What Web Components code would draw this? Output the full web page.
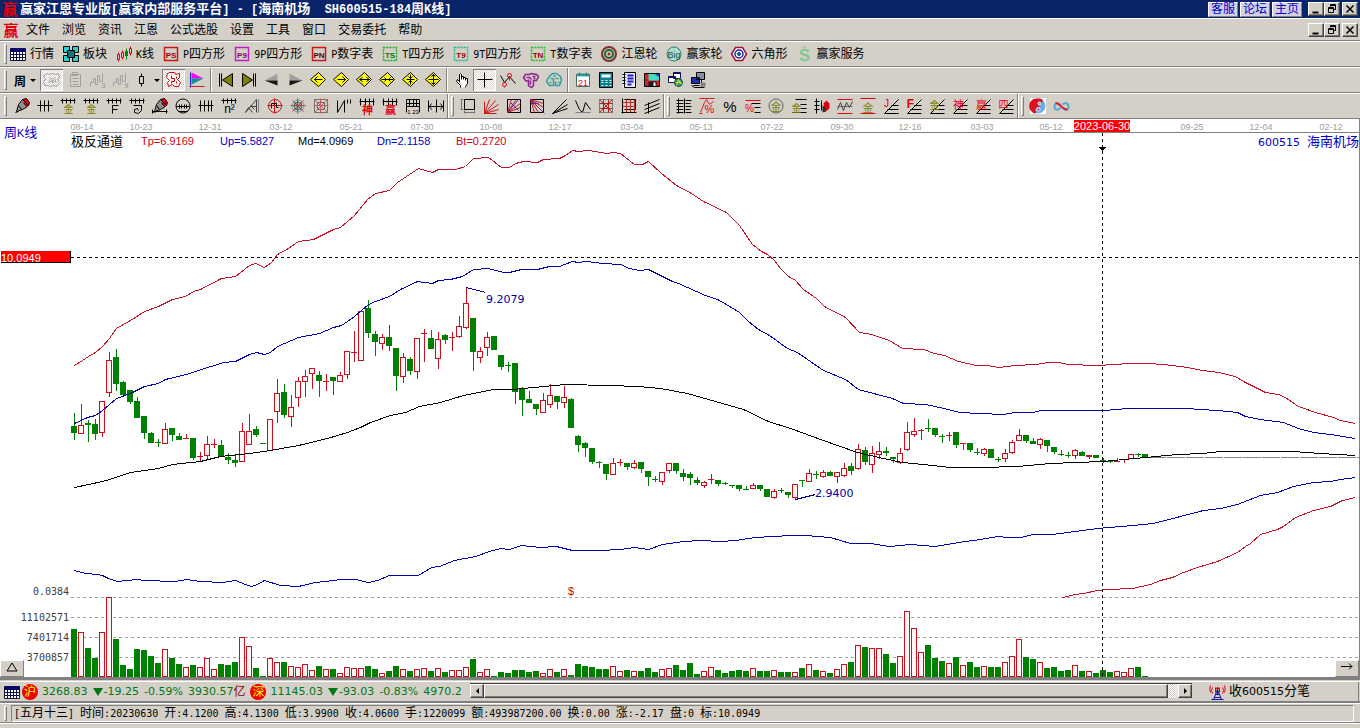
<!DOCTYPE html>
<html lang="zh-CN">
<head>
<meta charset="utf-8">
<title>赢家江恩专业版</title>
<style>
    body {
        margin: 0;
        background: #d4d0c8;
        font-family: "DejaVu Sans Mono", "Noto Sans CJK SC", monospace;
        font-size: 12px;
        overflow: hidden;
    }
</style>
</head>
<body>
<app-window></app-window>

<script>
// Latin runs use a half-width face so that they keep a 6px advance next to 12px hanzi
const mixed = (text) => text.replace(/[\x20-\x7e]+/g, (run) => `<span class="latin">${run}</span>`);

const define = (name, html, setup) => {
    const template = document.createElement("template");
    template.innerHTML = html;
    customElements.define(name, class extends HTMLElement {
        constructor() {
            super();
            this.attachShadow({ mode: "open" });
            this.shadowRoot.appendChild(template.content.cloneNode(true));
        }
        connectedCallback() {
            if (setup) setup(this, this.shadowRoot);
        }
    });
};

/* ---------- icons, drawn on a 16px grid ---------- */

const line = (d, c = "#000", w = 1) => `<path d="${d}" fill="none" stroke="${c}" stroke-width="${w}"/>`;
const fill = (d, c = "#000") => `<path d="${d}" fill="${c}"/>`;
const glyph = (t, x, y, size, c, extra = "") => `<text x="${x}" y="${y}" font-size="${size}" fill="${c}" text-anchor="middle" ${extra}>${t}</text>`;
const ring = (x, y, r, c, f = "none", w = 1) => `<circle cx="${x}" cy="${y}" r="${r}" fill="${f}" stroke="${c}" stroke-width="${w}"/>`;

const RED = "#e00010";
const OLIVE = "#808000";
const comb = line("M0 2H15M2 0V5M6 0V5M10 0V5M14 0V5");
const fan = line("M1 15H15M1 15L15 1M4 11H15M8 7H15");
const pen = fill("M8 1l4 -1 3 4 -1 3 -3 2z", RED) + fill("M8 1l4 7 -5 4 -4 0 1 -6z", "#909090") + line("M8 1l-4 5 -2 7 6 -2 5 -3M8 1l6 6M8 1l4 -1 3 4 -1 3M9 4l3 4") + line("M4 7l3 4M1 14l3 -1");
const boxed = (t, c, ink) => `<rect x="1" y="1" width="13" height="13" fill="none" stroke="${c}" stroke-width="1.5" ${t[0] === "T" ? 'stroke-dasharray="2 1"' : ""}/>` + glyph(t, 7.5, 11, 8, ink, 'font-weight="bold"');
const diamond = fill("M8 0L15 7L8 14L0 7z", "#ff0") + line("M8 0L15 7L8 14L0 7z");
const framed = (d) => line("M1 1H14V14H1z", "#808080") + line(d, "#b02020");

const ICONS = {
    logo: glyph("赢", 7.5, 13, 15, RED, 'font-weight="bold"'),
    table: fill("M0 2H15V14H0z", "#fff") + fill("M0 2H15V5H0z", "#000090") + line("M0 2H15V14H0zM0 5H15M0 8H15M0 11H15M3 5V14M6 5V14M9 5V14M12 5V14", "#101040"),
    blocks: fill("M0 0h6v6h-6zM9 0h6v6h-6zM0 9h6v6h-6zM9 9h6v6h-6z", "#2ad0d0") + line("M0 0h6v6h-6zM9 0h6v6h-6zM0 9h6v6h-6zM9 9h6v6h-6z") + fill("M4 4h7v7h-7z", "#107878") + line("M4 4h7v7h-7z"),
    kline: line("M2 6V8M2 13V15M1 8h2v5h-2z", RED) + line("M6 4V6M6 11V13M5 6h2v5h-2z", RED) + line("M10 2V13", "#080") + fill("M8.500 4.500h3v5h-3z", "#080") + line("M14 0V2M14 7V9M13 2h2v5h-2z", RED),
    ps: boxed("PS", "#c81818", "#900"), p9: boxed("P9", "#c020c0", "#806"), pn: boxed("PN", "#c81818", "#500"),
    ts: boxed("TS", "#20b020", "#070"), t9: boxed("T9", "#20b8a0", "#900"), tn: boxed("TN", "#20c020", "#900"),
    wheel: ring(7.5, 7.5, 7, "#803030", "#b8d0b8", 2) + ring(7.5, 7.5, 4, "#306030", "none", 2) + ring(7.5, 7.5, 1, "#a02020", "#a02020"),
    big: ring(7.5, 7.5, 7, "#208080", "#b0e0c8") + glyph("Big", 7.5, 11, 9, "#085050"),
    hex: fill("M4 1H11L15 7.5L11 14H4L0 7.5z", "#fff") + line("M4 1H11L15 7.5L11 14H4L0 7.5z", "#a01030", 1.5) + ring(7.5, 7.5, 4, "#2020d0", "#fff", 1.5) + ring(7.5, 7.5, 1.5, "#2020d0", "#0a0"),
    dollar: glyph("S", 8, 14, 17, "#80c890", 'font-weight="bold"') + line("M8 0V2M8 14V15", "#80c890", 2),

    flower: line("M3 1l2 1 3 -1 3 1 3 -1 1 4 -2 2 2 3 -3 4 -3 -1 -3 1 -3 -1 -3 0 -1 -4 2 -2 -2 -4zM5 5l3 2 3 -2M4 10l4 -2 4 2M8 7v4M5 7v2M11 7v2", "#a0a0a0"),
    clip: line("M3 2H13V14H3zM5 0H10V3H5zM5 6H11M5 9H11M5 12H11", "#a0a0a0"),
    wave3: line("M0 14V10H3V6H5V12H7V3H9V9H12V1", "#a0a0a0") + glyph("3", 13, 15, 7, "#909090"),
    wave9: line("M0 14V10H3V6H5V12H7V3H9V9H12V1", "#a0a0a0") + glyph("9", 13, 15, 7, "#909090"),
    candle: line("M7 1V4M7 11V14M5 4H9V11H5z", "#000"),
    brain: fill("M1 2H13V13H1z", "#fff4f4") + line("M3 0H8L9 2L13 1V5L11 7L14 10L12 14H8L6 12L2 14L1 10L3 8L0 5L1 1zM5 3V6H8V9H5V11M10 4V6M10 9V11", "#c01018"),
    flag: fill("M2 0L14 6H2z", "#f0f") + fill("M2 6H14L2 12z", "#109090") + line("M1 0V15", "#2020c0") + line("M0 14H15", "#c02020"),
    first: line("M1 1V14M3 1V14") + fill("M14 1V14L4 7.5z", OLIVE) + line("M14 1V14L4 7.5z"),
    last: line("M14 1V14M12 1V14") + fill("M1 1V14L11 7.5z", OLIVE) + line("M1 1V14L11 7.5z"),
    prev: fill("M13 1V8H0z", "#a0a0a0") + fill("M0 8L13 13V8z", "#181818"),
    next: fill("M2 1V8H15z", "#a0a0a0") + fill("M15 8L2 13V8z", "#181818"),
    dLeft: diamond + line("M4 7H12M7 4L4 7L7 10"),
    dRight: diamond + line("M4 7H12M9 4L12 7L9 10"),
    dWide: diamond + line("M3 7H13M6 5L3 7L6 9M10 5L13 7L10 9"),
    dNarrow: diamond + line("M2 7H14M5 5L7 7L5 9M11 5L9 7L11 9"),
    dIn: diamond + line("M8 2V12M4 7H12M6 4L8 6L10 4M6 10L8 8L10 10"),
    dTall: diamond + line("M8 2V12M3 7H13M6 4L8 2L10 4M6 10L8 12L10 10"),
    hand: fill("M5 8V1H7V6H13V11L11 15H6L2 9z", "#fff") + line("M5 10V2L6 1L7 2V7M7 4H9V7M9 5H11V8M11 6H13V11L11 14V15M6 15V13L2 9L3 7L5 9"),
    cross: line("M7 0V15M0 7H15"),
    pins: line("M0 3L4 10L9 4L15 11") + ring(4, 12, 2, RED) + ring(9, 3, 2, RED) + line("M4 14V15M9 5V8", RED),
    cloudP: line("M2 2H6L8 1L13 2L15 4L13 8H10V13L8 15L5 13V9L2 8L0 5zM3 5H6L8 7M9 4H12M7 8V12M10 6L12 6M5 7V9", "#902090", 1.5),
    cloudT: line("M6 1H10L14 4L15 8L13 13H9V9M6 1L2 5L0 9L3 13H7V6M4 6H7M9 6H12M3 10H5M11 10H13M7 3L9 4", "#30a0a0", 1.5),
    calendar: fill("M1 2H14V14H1z", "#fff") + fill("M1 1H14V4H1z", "#20b0b0") + line("M1 2H14V14H1zM4 0V3M11 0V3", "#407070") + glyph("21", 7.5, 13, 9, "#e01010"),
    calc: fill("M1 0H14V15H1z", "#108090") + line("M1 0H14V15H1z") + fill("M3 2H12V5H3z", "#fff") + line("M3 8H5M7 8H9M11 8H13M3 10H5M7 10H9M11 10H13M3 13H5M7 13H9M11 13H13", "#e0ffff"),
    note: fill("M1 0H14V15H1z", "#e8e8ff") + line("M3 0H14V15H3z") + line("M1 2H4M1 5H4M1 8H4M1 11H4") + line("M6 3H12M6 6H12M6 9H12M6 12H10", "#2020c0", 2),
    save: fill("M0 1H15V14H0z", "#d02020") + fill("M4 1H15V8H4z", "#40e0c0") + fill("M9 1H15V5z", "#2050d0") + fill("M4 9H12V14H4z", "#181830") + fill("M9 10H11V14H9z", "#fff") + line("M0 1H15V14H0z"),
    globe: fill("M1 4H8V10H1zM6 0H13V6H6z", "#fff") + line("M1 4H8V10H1zM6 0H13V6H6zM1 5H8M6 1H13", "#101060") + ring(11, 10, 4, "#104040", "#30a070") + line("M8 10H14M11 7L9 13M11 7L14 12", "#e0e020"),
    pcs: fill("M6 0H14V7H6z", "#8890a0") + fill("M1 5H9V11H1z", "#2030b0") + line("M6 0H14V7H6zM1 5H9V11H1zM3 13H9M11 7V14") + fill("M10 10H15V14H10z", "#808080") + line("M1 13L4 15H14"),

    pen,
    ticks: line("M0 7H15M3 2V13M7 2V13M11 2V13"),
    combJin1: comb + glyph("金", 8, 14, 10, OLIVE),
    combJin2: comb + glyph("金", 8, 14, 10, OLIVE),
    combF: comb + line("M6 15V7H12M6 11H11", "#000", 1),
    combSpiral: comb + line("M4 7H12V12L9 15L5 14V11L8 10L9 12"),
    penTicks: pen + line("M0 13H15M0 11V15M14 11V15"),
    circleTicks: ring(7.5, 7.5, 7, "#000") + line("M1 8H14M4 6V10M6 6V10M9 6V10M11 6V10M3 13H12"),
    ticks4: line("M0 7H15M2 2V13M6 2V13M10 2V13M13 2V13"),
    nSquare: comb + glyph("n²", 8, 14, 12, "#000"),
    triRuler: line("M1 14L12 1V14M1 14L4 9L8 14M12 8H6M10 11L6 7", "#404040") + line("M14 1V14", "#808080"),
    target: ring(7.5, 7.5, 6.5, "#a02020") + line("M7 0V15M0 7H15", RED) + line("M4 10V5H9V9H11M6 7L9 4"),
    star: ring(7.5, 7.5, 4, "#208080", "#a8a8a0") + line("M7 0V15M0 7H15M2 2L13 13M13 2L2 13", "#b04040") + ring(7.5, 7.5, 6, "#909090"),
    web: ring(7.5, 7.5, 4, "#409040") + line("M1 1H14V14H1zM4 4H11V11H4z", "#707070") + line("M7 0V15M0 7H15M1 1L14 14M14 1L1 14", "#c06060"),
    nQuote: line("M1 2V14M1 14L8 2V14") + line("M11 1V5M14 1V5"),
    shen: line("M0 3H15M1 0V7M6 0V7M10 0V7M14 0V7") + glyph("神", 8, 15, 11, RED, 'font-weight="bold"'),
    ying: line("M0 3H15M1 0V7M6 0V7M10 0V7M14 0V7") + glyph("赢", 8, 15, 11, RED, 'font-weight="bold"'),
    ruler123: line("M1 1H14V14M1 1V14M1 5H14M4 1V8M8 1V8M11 1V8M1 8H14") + glyph("1 23", 7.5, 15, 6, "#000"),
    widthArrow: line("M0 2V13M15 2V13M8 1V14M0 8H15M3 5L1 8L3 11M12 5L14 8L12 11"),

    square: line("M4 1H14V11H4z") + line("M0 1H3M0 11H3M1 1V11M4 14H14M4 12V15M14 12V15", "#707070"),
    fanRed: line("M1 15L1 3M1 15L6 1M1 15L12 2M1 15L15 6M1 15L15 11M1 15H13", "#c81818"),
    fanBox: line("M1 1H14V14H1z") + line("M1 14L5 1M1 14L9 2M1 14L14 5M1 14L14 9", "#c02020") + line("M1 14L12 1M4 4L12 12", "#6020a0"),
    fanBoxDown: line("M1 1H14V14H1z") + line("M1 1L14 5M1 1L14 9M1 1L9 14M1 1L5 14", "#c02020") + line("M1 1L15 15M1 5H9", "#6020a0"),
    fanThin: line("M0 15L14 1M0 15L15 6M0 15L15 10"),
    zigzag: line("M0 2L4 11L7 14L10 4L15 11") + line("M0 14H15", "#808080") ,
    gridRed: framed("M1 5H14M1 10H14M5 1V14M10 1V14M1 1L14 14M14 1L1 14"),
    gridDark: line("M1 0V15M0 14H15M3 11H14V1H3") + line("M1 4H14M1 8H14M5 1V14M9 1V14M13 1V14", "#b03030"),
    lines4: line("M0 7L15 1M0 11L15 5M0 15L15 9M4 4V15"),
    ladder: line("M2 0V15M8 0V15M0 2H7M0 5H7M0 8H7M0 11H7M0 14H7M9 2H15M9 5H14M9 8H15M9 11H14M9 14H15"),
    wavePct: line("M0 0H15M0 15H3M1 14L5 4L7 1L10 6L14 3", "#c82020") + glyph("%", 10, 14, 11, RED),
    pct: glyph("%", 7.5, 13, 15, "#000"),
    pctLines: glyph("%", 4, 13, 10, RED) + line("M0 2H15", RED) + line("M6 5H15M9 9H15M9 14H15"),
    jinRing: ring(7.5, 7.5, 7, "#606060") + glyph("金", 7.5, 12, 11, OLIVE),
    jinLines: line("M4 1H15M9 6H15M9 10H15M1 14H15") + glyph("金", 5, 13, 10, OLIVE),
    penRuler: line("M2 0V15M0 3H5M0 7H5M0 11H5M7 2V12") + fill("M9 5l3 -3 3 3v5l-5 4z", RED) + fill("M8 7l3 2v4l-3 1z", "#303030"),
    waveRed: line("M0 1H15M0 15H15", RED) + line("M0 8H15", "#707070") + line("M0 11L3 4L6 12L9 4L12 9L15 3", "#404040"),
    jinRed: line("M0 0H15M0 15H15", RED) + glyph("金", 7.5, 13, 11, OLIVE),
    fanJ: fan + glyph("J", 3, 8, 10, RED), fanF: fan + glyph("F", 4, 9, 12, RED, 'font-weight="bold"'),
    fanJin: fan + glyph("金", 5, 10, 10, OLIVE), fanShen: fan + glyph("神", 6, 10, 11, RED),
    fanYing: fan + glyph("赢", 6, 10, 11, RED), fanSi: fan + glyph("四", 5, 9, 10, RED),
    yinyang: fill("M-.5 -.5H15.5V15.500H-.5z", "#fff") + ring(7.5, 7.5, 7, "#60b0f0", "#60b0f0") + fill("M7.5 0A7.5 7.5 0 0 0 5 15C7 14 3 12 6 9C9 8 12 7 12 1C11 0 9 0 7.5 0z", "#e01020") + ring(9, 5, 1.5, "#fff", "#60b0f0") + ring(8, 11, 1.5, "#fff", "#e01020"),
    infinity: line("M7 7C5 4 1 4 1 8C1 12 5 12 7 9", "#58a8d0", 2) + line("M9 6C11 4 15 4 15 8C15 12 11 12 9 9", "#58a8d0", 2) + line("M2 5C6 3 9 12 14 11", "#d02030", 2),
    tower: line("M2 3A5 5 0 0 0 2 9M0 1A9 9 0 0 0 0 8M12 3A5 5 0 0 1 12 9M14 1A9 9 0 0 1 14 8M5 3V8M9 3V8", RED) + line("M7 5L3 15M7 5L11 15M5 10H9M4 13H10M1 15H13M7 4V10", "#101090") + ring(7, 4, 1, RED, RED),
    min: fill("M4 10H10V12H4z"),
    restore: line("M6 3H11V8H9M6 3V5M6 4H11M4 6H9V11H4zM4 7H9"),
    close: line("M4 4L11 11M11 4L4 11", "#000", 1.5),
};

define("tool-icon", `
    <style>
        :host { display: block; flex: none; width: 16px; height: 16px; }
        svg { display: block; width: 16px; height: 16px; overflow: visible; }
        text { font-family: "Liberation Sans", "Noto Sans CJK SC", sans-serif; }
    </style>
    <svg viewBox="-0.5 -0.5 16 16" aria-hidden="true"></svg>
`, (el, root) => {
    root.querySelector("svg").innerHTML = ICONS[el.getAttribute("name")] || "";
});

/* ---------- toolbars ---------- */

define("tool-bar", `
    <style>
        :host {
            display: flex;
            align-items: center;
            height: 24px;
            padding-left: 4px;
            border-top: 1px solid #fff;
            border-bottom: 1px solid #808080;
            background: #d4d0c8;
        }
        .grip { width: 1px; height: 18px; margin-right: 3px; border: 1px solid; border-color: #fff #808080 #808080 #fff; }
        ::slotted(tool-sep) { align-self: stretch; }
    </style>
    <div class="grip"></div>
    <slot></slot>
`);

// One thin divider inside a bar; "grip" starts a new docked bar
define("tool-sep", `
    <style>
        :host { display: flex; align-items: center; width: 6px; }
        :host::before { content: ""; align-self: stretch; width: 1px; margin-left: 2px; background: #808080; border-right: 1px solid #fff; }
        :host([grip]) { width: 9px; }
        :host([grip])::before { margin-left: 0; }
        :host([grip])::after { content: ""; width: 1px; height: 18px; margin-left: 2px; border: 1px solid; border-color: #fff #808080 #808080 #fff; }
    </style>
`);

define("tool-button", `
    <style>
        :host { display: block; }
        button {
            display: flex;
            align-items: center;
            justify-content: center;
            gap: 4px;
            width: 23px;
            height: 22px;
            padding: 0;
            border: 0;
            background: none;
            font: inherit;
            color: #000;
        }
        :host([pressed]) button {
            box-shadow: inset 1px 1px #808080, inset -1px -1px #fff;
            background: repeating-conic-gradient(#fff 0 25%, #dcd8d0 0 50%) 0 0 / 2px 2px;
        }
        :host([label]) button { width: auto; margin-right: 9px; line-height: 16px; white-space: nowrap; }
        :host([drop]) button { width: 30px; }
        :host([drop]) button::after { content: ""; border: 3px solid transparent; border-top-color: #000; border-bottom: 0; }
        .latin { font-size: 10px; }
        b:empty, .text:empty { display: none; }
    </style>
    <button type="button"><tool-icon></tool-icon><b></b><span class="text"></span></button>
`, (el, root) => {
    const icon = el.getAttribute("icon");
    if (icon) root.querySelector("tool-icon").replaceWith(Object.assign(document.createElement("template"), { innerHTML: `<tool-icon name="${icon}"></tool-icon>` }).content);
    else root.querySelector("tool-icon").remove();
    root.querySelector("b").textContent = el.getAttribute("period") || "";
    root.querySelector(".text").innerHTML = mixed(el.getAttribute("label") || "");
    if (icon && !el.hasAttribute("label")) root.querySelector("button").setAttribute("aria-label", icon);
});

define("window-controls", `
    <style>
        :host { display: flex; margin: 0 2px 0 6px; }
        button {
            display: grid;
            place-content: center;
            width: 16px;
            height: 14px;
            padding: 0;
            border: 1px solid;
            border-color: #fff #404040 #404040 #fff;
            background: #d4d0c8;
            box-shadow: inset -1px -1px #808080;
            overflow: hidden;
        }
        button:last-child { margin-left: 2px; }
    </style>
    <button type="button" aria-label="最小化"><tool-icon name="min"></tool-icon></button>
    <button type="button" aria-label="还原"><tool-icon name="restore"></tool-icon></button>
    <button type="button" aria-label="关闭"><tool-icon name="close"></tool-icon></button>
`);

define("title-bar", `
    <style>
        :host { display: flex; align-items: center; height: 18px; padding-left: 2px; background: #0a246a; color: #fff; }
        h1 { flex: 1; margin: 0 0 0 2px; font-size: 13px; line-height: 18px; font-weight: bold; white-space: pre; }
        .latin { font: bold 12px "Liberation Mono", monospace; }
        nav { display: flex; gap: 2px; }
        a {
            width: 28px;
            height: 13px;
            border: 1px solid;
            border-color: #fff #808080 #808080 #fff;
            background: #d4d0e0;
            color: #0000d0;
            line-height: 13px;
            text-align: center;
            text-decoration: none;
        }
    </style>
    <tool-icon name="logo"></tool-icon>
    <h1>${mixed("赢家江恩专业版[赢家内部服务平台] - [海南机场  SH600515-184周K线]")}</h1>
    <nav><a href="#service">客服</a><a href="#forum">论坛</a><a href="#home">主页</a></nav>
    <window-controls></window-controls>
`);

define("menu-bar", `
    <style>
        :host { display: flex; align-items: center; height: 20px; padding: 1px 0 0 3px; border-top: 1px solid #fff; border-bottom: 1px solid #808080; }
        nav { display: flex; flex: 1; gap: 12px; padding-left: 7px; }
        button { padding: 0; border: 0; background: none; color: #000; font: inherit; line-height: 18px; }
    </style>
    <tool-icon name="logo"></tool-icon>
    <nav></nav>
    <window-controls></window-controls>
`, (el, root) => {
    root.querySelector("nav").innerHTML = "文件 浏览 资讯 江恩 公式选股 设置 工具 窗口 交易委托 帮助"
        .split(" ").map((name) => `<button type="button">${name}</button>`).join("");
});

/* ---------- chart ---------- */

// side, high, body top, body bottom, low, volume top: one entry per week
const WEEKS = `
g 413 426 433 439 629|r 404 425 433 433 632|g 420 423 425 441 648|g 419 424 434 439 658|r 401 401 432 436 632
r 352 360 392 396 597|g 349 357 384 390 639|g 381 382 395 395 665|g 390 390 402 403 669|g 397 401 418 418 649
g 416 416 433 438 650|g 432 433 443 443 656|g 439 442 442 446 663|r 423 429 443 443 649|g 428 428 435 440 658
g 433 436 440 440 664|r 434 438 439 439 667|g 438 438 458 459 665|r 452 456 457 460 667|r 436 444 455 459 658
r 439 444 445 447 669|g 440 445 456 456 664|g 453 457 460 463 665|g 455 460 463 466 662|r 423 431 461 461 637
r 414 431 444 444 646|g 426 429 435 436 668|g 443 443 443 443 676|r 419 419 450 450 658|r 379 393 411 422 662
g 384 392 415 417 662|r 395 407 416 426 666|r 377 381 397 406 667|r 370 376 381 396 664|r 368 368 373 388 670
g 371 375 381 396 666|r 374 381 381 390 669|g 377 377 381 394 669|r 372 375 381 381 673|r 351 351 374 378 667
r 331 352 352 361 668|r 311 311 360 360 668|g 300 308 333 337 666|g 331 334 342 355 669|r 334 337 343 349 673
g 325 337 346 350 671|g 348 348 376 390 666|r 353 357 376 382 669|g 357 359 371 374 671|r 338 338 371 378 669
r 329 333 334 361 668|g 330 338 349 349 671|r 332 339 358 368 668|g 334 335 340 343 672|r 332 337 337 350 670
r 316 326 336 337 670|r 287 303 327 328 667|g 318 318 352 370 659|r 347 351 357 362 672|r 332 337 347 355 669
g 336 336 350 350 676|g 355 355 367 369 672|g 362 365 366 371 673|g 363 363 392 403 670|g 387 389 400 415 670
g 391 399 403 403 672|g 404 404 409 414 671|r 393 400 412 412 673|r 384 395 404 407 669|g 396 396 402 408 672
r 386 397 402 407 669|g 398 399 428 428 675|g 435 436 445 451 664|g 442 443 448 456 666|g 448 448 462 463 667
g 461 462 463 467 669|g 464 464 474 479 669|r 458 463 474 474 666|r 459 462 462 465 671|g 463 463 467 469 670
r 460 463 467 468 671|g 462 462 469 472 671|g 471 471 477 485 668|g 476 479 480 481 672|r 472 472 481 484 669
r 463 463 470 472 668|g 463 463 471 473 665|g 469 473 477 480 670|g 472 474 478 484 663|g 477 480 483 484 674
r 481 482 485 487 671|r 474 479 480 483 667|g 480 480 484 485 670|g 482 483 483 484 673|g 485 485 485 487 671
g 485 485 489 490 670|g 486 489 489 489 671|r 483 485 488 488 668|g 485 485 489 490 671|g 489 489 497 497 671
r 489 491 497 498 670|g 488 490 490 492 672|g 492 492 495 497 672|r 484 484 497 499 672|g 480 480 480 486 668
r 469 473 481 481 664|g 471 474 474 478 670|r 470 472 476 477 671|g 471 472 476 476 673|r 472 472 476 482 669
r 463 468 475 476 664|g 463 466 471 474 662|r 444 449 468 469 645|g 447 450 462 464 647|r 446 453 464 472 648
r 442 451 454 458 648|g 447 451 453 455 654|g 457 457 459 462 663|r 448 453 462 463 656|r 422 432 449 450 611
r 418 431 434 436 628|r 429 430 431 439 652|g 419 428 428 431 645|g 428 428 435 436 658|g 434 436 437 442 661
r 432 435 435 440 663|g 432 432 445 447 657|r 443 443 443 449 665|g 443 443 450 451 662|g 448 452 453 454 667
r 448 449 453 455 666|g 449 449 458 458 667|g 457 459 459 461 667|r 449 453 458 461 662|r 440 442 452 453 656
r 429 435 440 440 639|g 435 435 441 442 657|g 438 441 444 444 659|r 438 439 444 448 662|g 440 440 446 451 668
g 447 447 452 453 667|g 450 454 454 455 671|g 452 455 455 457 670|r 449 450 455 458 665|g 451 452 456 456 671
r 455 455 457 458 671|g 455 455 458 458 673|g 458 460 460 462 670|g 460 461 461 462 672|r 458 461 461 461 671
r 459 459 460 462 672|r 454 454 458 458 668|g 453 454 454 456 667|g 454 454 457 457 676
`.trim().split(/[|\n]/).map((row) => row.split(" "));

const CURVES = [
    ["#c01428", "74,365 82,360 88,356 95,352 102,346 109,338 116,328 130,320 144,311 158,306 172,299 185,296 193,291 200,289 221,278 235,276 249,265 255,263 264,267 271,262 277,254 288,248 298,241 313,239 333,229 340,227 354,215 367,199 375,193 389,190 397,182 418,168 432,172 438,169 455,169 465,166 473,158 488,157 501,167 509,167 515,163 523,161 537,162 543,159 559,158 565,155 572,150 578,151 588,150 607,153 613,152 620,153 634,164 642,164 648,161 661,173 676,185 691,193 703,201 726,212 739,225 752,244 761,251 767,254 774,260 780,268 788,276 795,280 803,289 816,298 824,306 845,317 859,332 871,334 889,340 902,348 923,349 934,353 944,355 958,361 976,365 987,365 998,367 1015,365 1035,364 1048,362 1058,362 1068,364 1097,365 1130,363 1147,363 1163,364 1187,367 1202,370 1218,372 1235,376 1243,381 1265,392 1278,394 1285,397 1298,406 1315,412 1333,417 1340,420 1355,423"],
    ["#0000a8", "74,423 87,417 95,415 102,410 116,398 130,393 144,386 158,383 165,379 186,374 207,367 214,365 223,362 235,361 249,354 256,352 264,354 270,352 277,346 284,343 298,337 319,333 333,327 341,325 347,321 354,316 361,310 368,304 375,301 389,296 400,289 417,281 432,283 438,280 450,279 462,276 473,269 488,268 503,272 509,272 521,269 537,269 549,266 559,266 572,261 578,262 586,261 603,263 620,264 629,268 639,270 648,269 672,281 678,283 705,295 717,299 726,304 739,312 748,321 758,329 769,335 787,348 797,352 823,370 845,379 858,389 892,398 903,403 925,404 944,408 959,412 980,413 1003,414 1015,412 1033,412 1040,410 1103,410 1128,408 1188,408 1198,409 1218,410 1237,412 1245,416 1260,419 1283,422 1298,428 1313,432 1330,434 1355,438"],
    ["#000", "74,487 102,481 109,479 130,472 158,468 172,464 200,461 220,456 249,453 270,450 298,445 327,438 347,432 360,427 370,422 390,415 405,412 419,406 440,402 463,395 493,389 513,389 533,387 565,384 608,385 638,386 660,388 687,393 743,409 768,421 793,429 820,439 857,452 883,458 902,462 932,465 950,467 980,467 1017,466 1050,463 1102,461 1145,457 1177,454 1202,453 1220,451 1292,451 1320,453 1355,455"],
    ["#0000a8", "74,570 85,573 97,574 102,575 108,578 117,581 137,579 143,580 175,581 186,579 200,581 222,582 235,580 245,584 251,586 257,584 264,580 280,585 298,586 315,582 333,580 340,579 355,579 368,582 377,580 389,575 418,575 431,567 439,566 454,560 475,556 489,551 500,548 509,549 521,545 540,547 556,546 572,550 600,550 620,549 634,547 648,549 662,544 683,541 700,540 720,541 735,540 755,537 790,535 805,535 830,537 850,543 870,543 889,546 910,544 935,546 958,542 980,539 997,536 1007,537 1020,537 1033,534 1052,534 1097,528 1133,525 1153,523 1180,516 1203,510 1220,508 1237,504 1260,495 1277,492 1293,486 1313,482 1330,481 1340,479 1355,477"],
    ["#c01428", "1062,597 1075,594 1083,593 1097,590 1108,589 1132,588 1150,584 1160,580 1172,577 1183,572 1197,567 1217,561 1237,552 1245,546 1250,543 1260,534 1277,529 1283,526 1295,517 1313,510 1330,506 1342,500 1355,497"],
];

const DATES = [[82, "08-14"], [141, "10-23"], [210, "12-31"], [281, "03-12"], [351, "05-21"], [422, "07-30"], [491, "10-08"], [560, "12-17"], [632, "03-04"], [701, "05-13"], [772, "07-22"], [842, "09-30"], [910, "12-16"], [982, "03-03"], [1051, "05-12"], [1192, "09-25"], [1261, "12-04"], [1331, "02-12"]];
const LEGEND = [[141, "Tp=6.9169", "#d00010"], [220, "Up=5.5827", "#0000c0"], [298, "Md=4.0969", "#000"], [377, "Dn=2.1158", "#0000c0"], [456, "Bt=0.2720", "#d00010"]];
const SCALE = [[595, "0.0384"], [621, "11102571"], [641, "7401714"], [661, "3700857"]];
const BASE = 677;
const STEP = 7;

const drawWeeks = () => WEEKS.map(([side, ...values], i) => {
    const [high, top, bottom, low, volume] = values.map(Number);
    const x = 71 + i * STEP;
    const height = bottom - top;
    const up = side === "r";
    const color = up ? "#c81020" : "#008000";
    const wick = (a, b) => b > a ? `<rect x="${x + 3}" y="${a}" width="1" height="${b - a + 1}" fill="${color}"/>` : "";
    const hollow = (y, h) => `<rect x="${x + .5}" y="${y + .5}" width="5" height="${h}" fill="#fff6f4" stroke="${color}"/>`;
    const solid = (y, h) => `<rect x="${x}" y="${y}" width="6" height="${h}" fill="${color}"/>`;
    const body = up && height > 2 ? hollow(top, height) : solid(top, Math.max(height, 1));
    const bar = up ? hollow(volume, BASE - volume - 1) : solid(volume, BASE - volume);
    return wick(high, top) + wick(bottom, low) + (height < 1 ? wick(high, low) : "") + body + bar;
}).join("");

define("kline-chart", `
    <style>
        :host { display: block; position: relative; background: #fff; border-right: 1px solid #808080; border-bottom: 3px solid #808080; }
        svg { display: block; width: 100%; height: 558px; }
        text { font: 11px "Liberation Sans", "Noto Sans CJK SC", sans-serif; }
        text.date { font-size: 9px; fill: #a0a0a0; text-anchor: middle; }
        text.han { font-size: 13px; }
        text.wide { font-family: "DejaVu Sans", sans-serif; }
        text.scale { font: 10px "DejaVu Sans Mono", monospace; fill: #404040; text-anchor: end; }
        .end { text-anchor: end; }
        button {
            position: absolute;
            bottom: 0;
            width: 24px;
            height: 17px;
            padding: 0;
            border: 1px solid;
            border-color: #fff #808080 #808080 #fff;
            background: #d4d0c8;
        }
        button svg { width: 22px; height: 15px; }
        .expand { left: 0; }
        .forward { right: 0; }
    </style>
    <svg class="plot" role="img" aria-label="周K线"></svg>
    <button class="expand" type="button" aria-label="展开"><svg viewBox="0 0 22 15"><path d="M11 2L16 10H6z" fill="none" stroke="#000"/></svg></button>
    <button class="forward" type="button" aria-label="前进"><svg viewBox="0 0 22 15"><path d="M5 5.5H16M13 2.500L16 5.500L13 8.500" fill="none" stroke="#000"/></svg></button>
`, (el, root) => {
    const rule = (y, x, color, dash) => `<line x1="${x}" x2="100%" y1="${y}.5" y2="${y}.5" stroke="${color}" stroke-dasharray="${dash}"/>`;
    root.querySelector(".plot").innerHTML = `
        <g transform="translate(0 -119)">
            <g shape-rendering="crispEdges">
                ${rule(132, 71, "#808080", "none")}
                ${[597, 617, 637, 657].map((y) => rule(y, 71, "#a0a0a0", "3 3")).join("")}
                ${rule(457, 1148, "#808080", "18 1")}
                ${drawWeeks()}
                ${CURVES.map(([color, points]) => `<polyline points="${points}" transform="translate(.5 .5)" fill="none" stroke="${color}"/>`).join("")}
                ${rule(257, 71, "#000", "3 3")}
                <line x1="1102.5" x2="1102.5" y1="133" y2="677" stroke="#000" stroke-dasharray="3 3"/>
                <path d="M1099 147H1106L1103 151H1102z"/>
                <path d="M466.5 287.5L485.5 292.5M795.5 499.5L815.5 494.5" stroke="#0000a8"/>
                <rect x="1" y="251" width="70" height="12" fill="#000"/>
                <rect x="1" y="251" width="69" height="11" fill="#f00"/>
                <rect x="1074" y="120" width="56" height="12" fill="#f00"/>
            </g>
            ${DATES.map(([x, date]) => `<text class="date" x="${x}" y="130">${date}</text>`).join("")}
            <text x="1102" y="130" fill="#fff" text-anchor="middle">2023-06-30</text>
            <text x="1" y="262" fill="#fff">10.0949</text>
            <text class="han" x="4" y="137" fill="#0000c0">周<tspan font-size="11">K</tspan>线</text>
            <text class="han" x="71" y="146">极反通道</text>
            ${LEGEND.map(([x, value, color]) => `<text x="${x}" y="145" fill="${color}">${value}</text>`).join("")}
            <text class="han end" x="100%" y="146" fill="#0000c0" xml:space="preserve"><tspan font-family="DejaVu Sans" font-size="11">600515  </tspan>海南机场</text>
            <text class="wide" x="486" y="303" fill="#0000a8">9.2079</text>
            <text class="wide" x="815" y="497" fill="#0000a8">2.9400</text>
            <text x="568" y="595" fill="#d00010">$</text>
            ${SCALE.map(([y, value]) => `<text class="scale" x="69" y="${y}">${value}</text>`).join("")}
        </g>
    `;
});

/* ---------- bottom bars ---------- */

define("market-quote", `
    <style>
        :host { display: flex; align-items: center; gap: 5px; margin-right: 3px; color: #007818; line-height: 16px; }
        i { width: 16px; height: 16px; margin-right: -1px; border-radius: 8px; background: #f00000; color: #ff0; font-size: 12px; font-style: normal; text-align: center; }
        .change { display: flex; align-items: center; gap: 1px; }
        .change::before { content: ""; border: 5px solid transparent; border-top: 8px solid #007818; border-bottom: 0; }
        .turnover { display: flex; align-items: center; }
        .unit { color: #800000; font-size: 12px; }
    </style>
    <i></i><span class="index"></span><span class="change"></span><span class="rate"></span><span class="turnover"></span>
`, (el, root) => {
    root.querySelector("i").textContent = el.getAttribute("market");
    for (const key of ["index", "change", "rate"]) root.querySelector(`.${key}`).textContent = el.getAttribute(key);
    root.querySelector(".turnover").innerHTML = el.getAttribute("turnover").replace("亿", '<span class="unit">亿</span>');
});

define("ticker-bar", `
    <style>
        :host { display: flex; height: 19px; border-top: 1px solid #fff; border-bottom: 2px solid #808080; font: 11px "DejaVu Sans", "Noto Sans CJK SC", sans-serif; white-space: nowrap; }
        .quotes { display: flex; align-items: center; flex: 0 0 466px; gap: 2px; padding-left: 4px; overflow: hidden; }
        .scroll { display: flex; flex: 1; height: 14px; margin: 1px 17px 0 0; border-top: 1px solid #404040; background: repeating-conic-gradient(#fff 0 25%, #d4d0c8 0 50%) 0 0 / 2px 2px; }
        .scroll > * { padding: 0; border: 1px solid; border-color: #fff #404040 #404040 #fff; background: #d4d0c8; box-shadow: inset -1px -1px #808080; }
        button { display: grid; place-items: center; width: 14px; }
        button::before { content: ""; border: 3px solid transparent; border-right: 3px solid #000; border-left: 0; }
        button:last-child::before { border-right: 0; border-left: 3px solid #000; }
        .thumb { flex: 1; margin-right: 10px; }
        .feed { display: flex; align-items: center; gap: 3px; flex: 0 0 148px; margin-right: 1px; border-right: 1px solid #808080; padding-left: 1px; line-height: 16px; }
        .feed span { font-size: 13px; }
        .feed .latin { font-size: 11px; }
    </style>
    <div class="quotes">
        <tool-icon name="table"></tool-icon>
        <market-quote market="沪" index="3268.83" change="-19.25" rate="-0.59%" turnover="3930.57亿"></market-quote>
        <market-quote market="深" index="11145.03" change="-93.03" rate="-0.83%" turnover="4970.2"></market-quote>
    </div>
    <div class="scroll">
        <button type="button" aria-label="向左"></button>
        <div class="thumb"></div>
        <button type="button" aria-label="向右"></button>
    </div>
    <div class="feed"><tool-icon name="tower"></tool-icon><span>${mixed("收600515分笔")}</span></div>
`);

define("status-bar", `
    <style>
        :host { display: flex; align-items: center; height: 18px; padding: 0 6px 0 4px; border-top: 1px solid #fff; border-bottom: 1px solid #808080; box-shadow: 0 1px #fff; }
        .grip { width: 1px; height: 13px; border: 1px solid; border-color: #fff #808080 #808080 #fff; }
        output { flex: 1; margin-left: 4px; padding-left: 2px; border: 1px solid; border-color: #808080 #fff #fff #808080; line-height: 15px; height: 15px; white-space: pre; }
        .latin { font-size: 10px; }
    </style>
    <div class="grip"></div>
    <output>${mixed("[五月十三] 时间:20230630 开:4.1200 高:4.1300 低:3.9900 收:4.0600 手:1220099 额:493987200.00 换:0.00 涨:-2.17 盘:0 标:10.0949")}</output>
`);

/* ---------- window ---------- */

const buttons = (names) => names.split(" ").map((name) => name === "|" ? "<tool-sep></tool-sep>" : name === "||" ? "<tool-sep grip></tool-sep>"
    : `<tool-button icon="${name.replace("*", "")}" ${name.endsWith("*") ? "pressed" : ""}></tool-button>`).join("");

const VIEWS = [["table", "行情"], ["blocks", "板块"], ["kline", "K线"], ["ps", "P四方形"], ["p9", "9P四方形"], ["pn", "P数字表"], ["ts", "T四方形"], ["t9", "9T四方形"], ["tn", "T数字表"], ["wheel", "江恩轮"], ["big", "赢家轮"], ["hex", "六角形"], ["dollar", "赢家服务"]];

define("app-window", `
    <style>
        :host { display: flex; flex-direction: column; min-height: 100vh; background: #d4d0c8; cursor: default; }
        ticker-bar { margin-top: 1px; }
    </style>
    <title-bar></title-bar>
    <menu-bar></menu-bar>
    <tool-bar>${VIEWS.map(([icon, label]) => `<tool-button icon="${icon}" label="${label}"></tool-button>`).join("")}</tool-bar>
    <tool-bar>
        <tool-button period="周" drop></tool-button>
        ${buttons("flower* clip wave3 wave9")}
        <tool-button icon="candle" drop></tool-button>
        ${buttons("brain* flag | first last prev next dLeft dRight dWide dNarrow dIn dTall | hand cross* pins cloudP cloudT | calendar calc note save globe pcs")}
    </tool-bar>
    <tool-bar>
        ${buttons("pen ticks combJin1 combJin2 combF combSpiral penTicks circleTicks ticks4 nSquare triRuler target star web nQuote shen ying ruler123 widthArrow || square fanRed fanBox fanBoxDown fanThin zigzag gridRed gridDark lines4 || ladder wavePct pct pctLines jinRing jinLines penRuler waveRed jinRed fanJ fanF fanJin fanShen fanYing fanSi || yinyang infinity")}
    </tool-bar>
    <kline-chart></kline-chart>
    <ticker-bar></ticker-bar>
    <status-bar></status-bar>
`);
</script>
</body>
</html>
